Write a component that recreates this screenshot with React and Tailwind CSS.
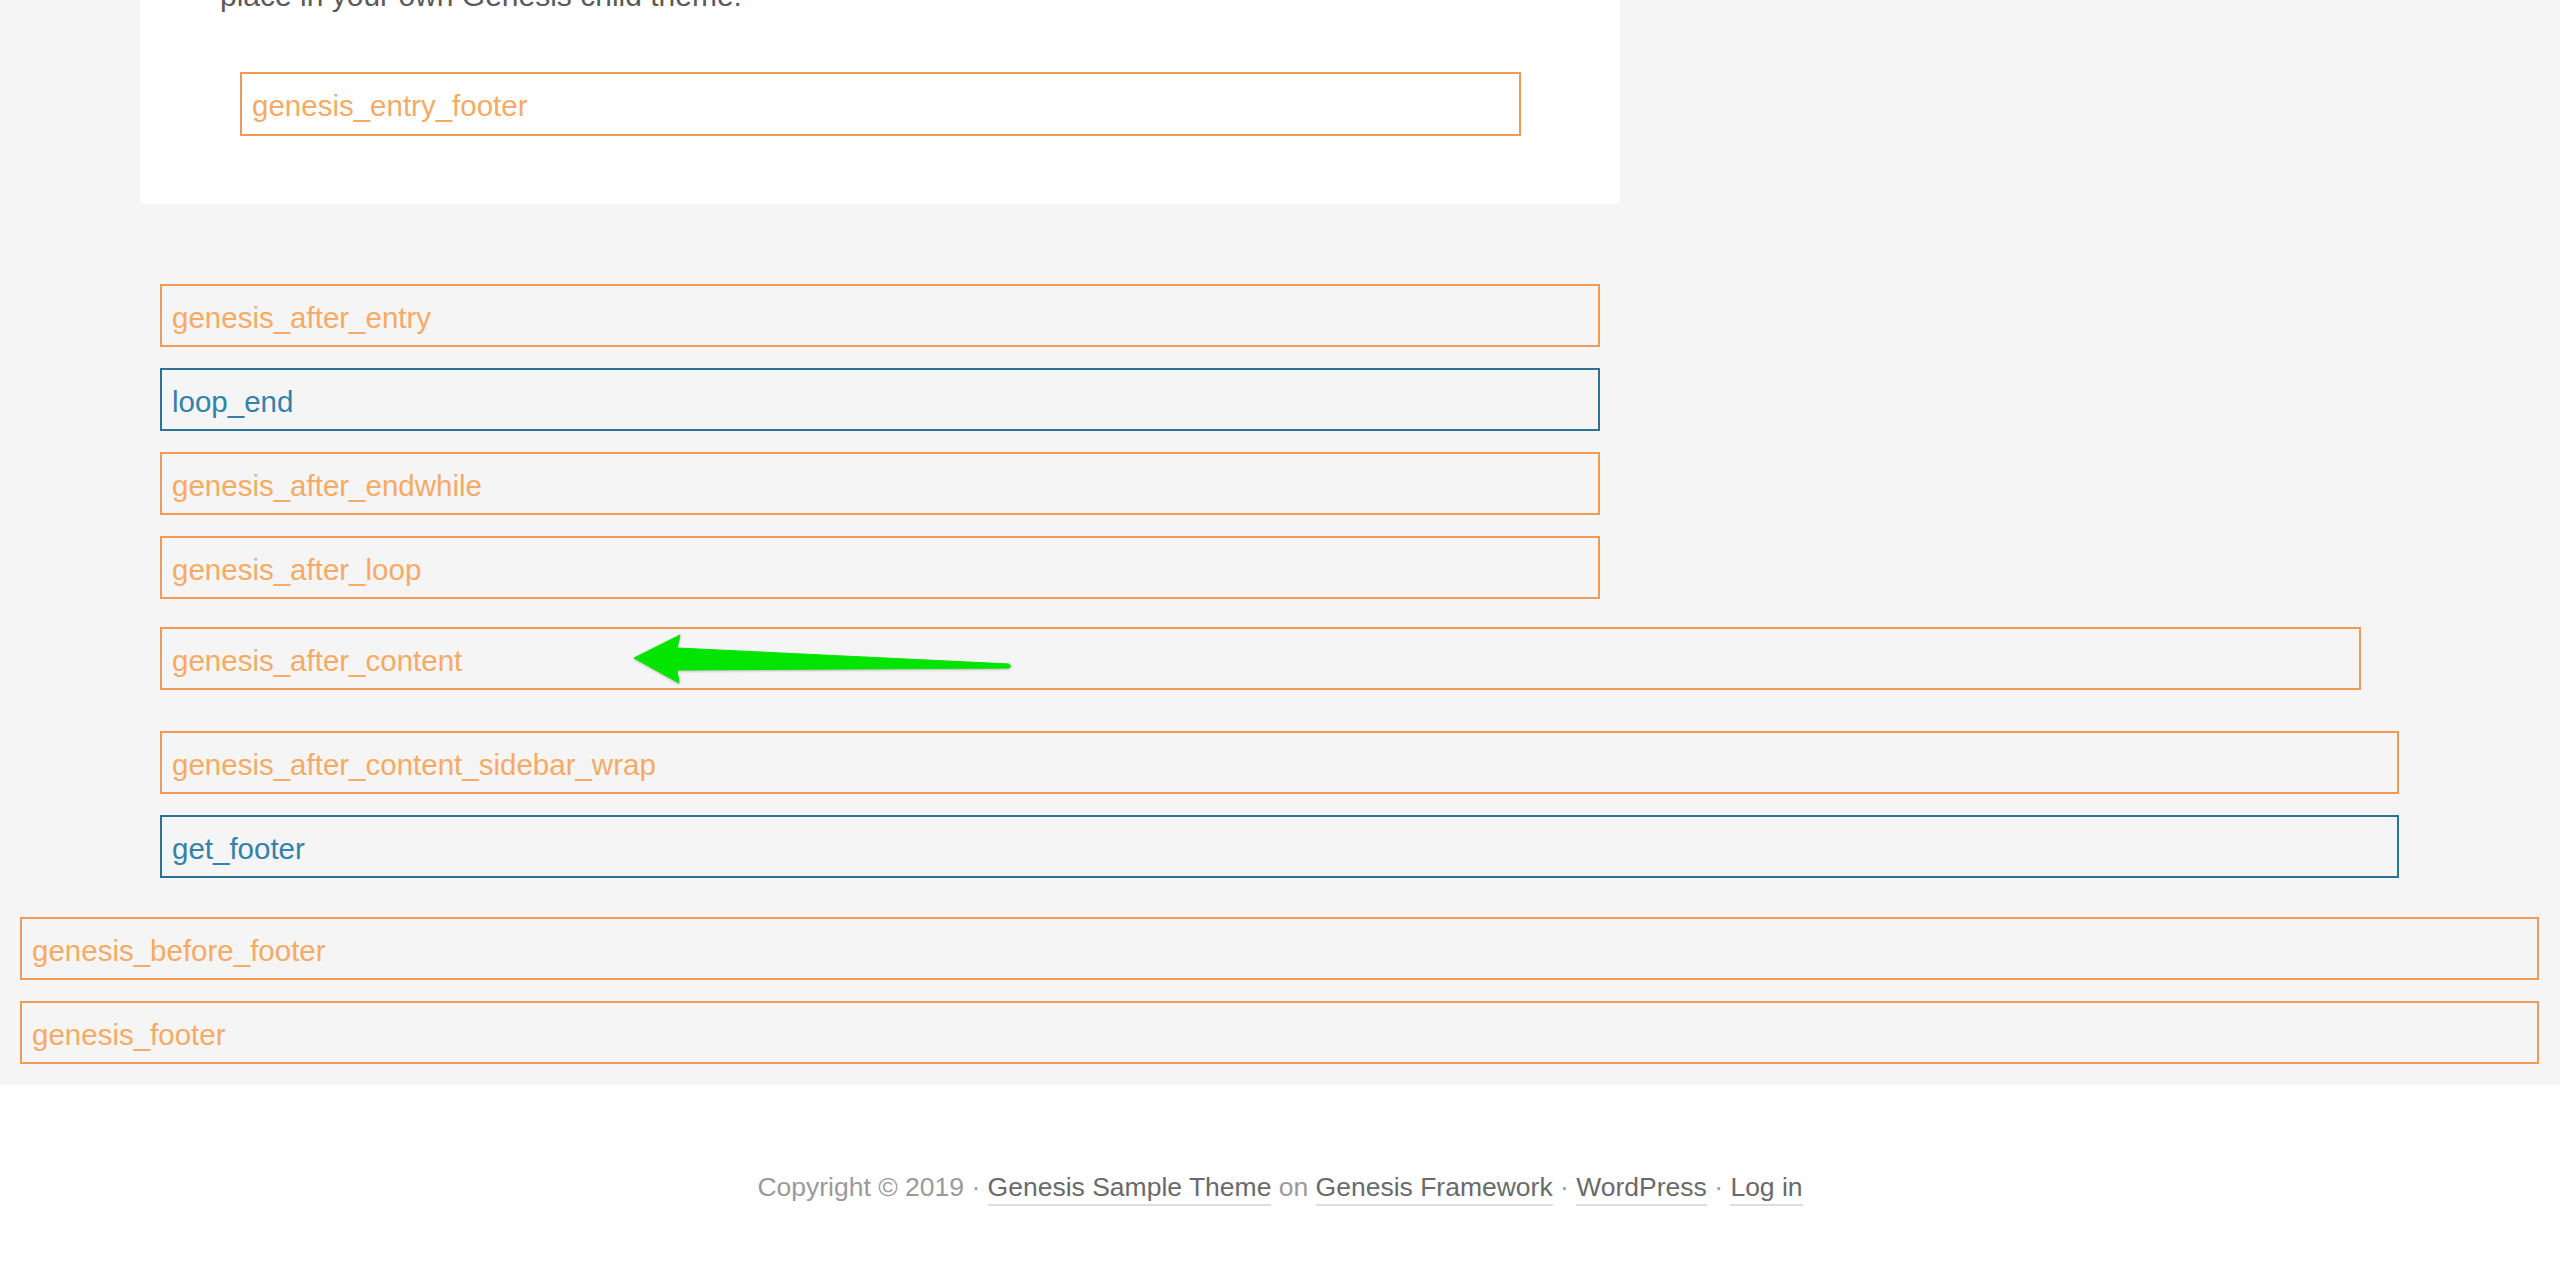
import React from 'react'

const tones = {
  orange: 'border-[#f09b55] text-[#f5aa66]',
  blue: 'border-[#2c7295] text-[#3482aa]',
}

function Hook({ name, tone = 'orange', className = '' }) {
  return (
    <div className={`flex h-[63px] shrink-0 items-center border-2 pl-[10px] pt-[5px] text-[29.5px] ${tones[tone]} ${className}`}>
      {name}
    </div>
  )
}

function FooterLink({ children }) {
  return <span className="border-b-2 border-[#dddddd] pb-[2px] text-[#6a6a6a]">{children}</span>
}

function GreenArrow() {
  return (
    <svg
      className="absolute left-[620px] top-[625px] drop-shadow-[0_1px_1px_rgba(0,0,0,0.25)]"
      width="400"
      height="70"
      viewBox="0 0 400 70"
    >
      <path
        d="M14 33 L60 10 L57 23 L389 39 Q392 41 389 43 L57 45 L59 58 Z"
        fill="#00e400"
        stroke="#00e400"
        strokeWidth="1"
        strokeLinejoin="round"
      />
    </svg>
  )
}

export default function App() {
  return (
    <div className="relative min-h-[1262px] overflow-hidden bg-white font-['Liberation_Sans',Arial,sans-serif] font-light">
      <div className="flex flex-col bg-[#f5f5f5] pb-[21px]">
        <div className="ml-[140px] flex w-[1480px] flex-col rounded-b-md bg-white px-[80px] pb-[68px]">
          <p className="-mt-[28px] text-[30px] leading-[48px] text-[#5a5a5a]">
            place in your own Genesis child theme.
          </p>
          <div className="ml-[20px] mt-[52px] flex h-[64px] w-[1281px] items-center border-2 border-[#f09b55] bg-white pl-[10px] pt-[5px] text-[29.5px] text-[#f5aa66]">
            genesis_entry_footer
          </div>
        </div>

        <div className="ml-[160px] mt-[80px] flex flex-col">
          <div className="flex w-[1440px] flex-col gap-[21px]">
            <Hook name="genesis_after_entry" />
            <Hook name="loop_end" tone="blue" />
            <Hook name="genesis_after_endwhile" />
            <Hook name="genesis_after_loop" />
          </div>
          <Hook name="genesis_after_content" className="mt-[28px] w-[2201px]" />
          <Hook name="genesis_after_content_sidebar_wrap" className="mt-[41px] w-[2239px]" />
          <Hook name="get_footer" tone="blue" className="mt-[21px] w-[2239px]" />
        </div>

        <div className="ml-[20px] mt-[39px] flex w-[2519px] flex-col gap-[21px]">
          <Hook name="genesis_before_footer" />
          <Hook name="genesis_footer" />
        </div>
      </div>

      <footer className="pt-[82px] text-center text-[26.5px] leading-[40px] text-[#9a9a9a]">
        Copyright © 2019 · <FooterLink>Genesis Sample Theme</FooterLink> on{' '}
        <FooterLink>Genesis Framework</FooterLink> · <FooterLink>WordPress</FooterLink> ·{' '}
        <FooterLink>Log in</FooterLink>
      </footer>

      <GreenArrow />
    </div>
  )
}
